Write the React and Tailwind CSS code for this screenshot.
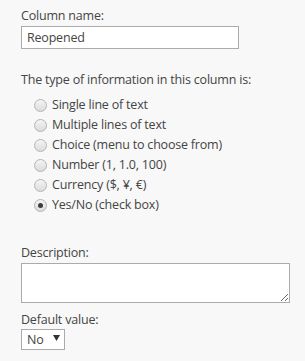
const types = [
  "Single line of text",
  "Multiple lines of text",
  "Choice (menu to choose from)",
  "Number (1, 1.0, 100)",
  "Currency ($, ¥, €)",
  "Yes/No (check box)",
];

function Radio({ checked }) {
  return (
    <span className="flex h-[13px] w-[13px] shrink-0 items-center justify-center rounded-full border border-[#b4b4b4] bg-gradient-to-b from-[#f4f4f4] to-[#dcdcdc]">
      {checked && <span className="h-[5px] w-[5px] rounded-full bg-[#3c3c3c]" />}
    </span>
  );
}

export default function App() {
  const selected = "Yes/No (check box)";

  return (
    <div
      className="min-h-[361px] w-[305px] bg-[#f8f8f8] pl-[21px] pt-2 text-[12.5px] leading-4 tracking-[-0.2px] text-[#444]"
      style={{ fontFamily: '"Open Sans", "Noto Sans", sans-serif' }}
    >
      <div className="mb-[2px]">Column name:</div>
      <div className="flex h-[23px] w-[218px] items-center border border-[#ababab] bg-white pl-[5px]">
        Reopened
      </div>

      <div className="mt-[23px]">The type of information in this column is:</div>
      <div className="mt-[7px] flex flex-col pl-[13px]">
        {types.map((t) => (
          <label key={t} className="flex h-5 items-center gap-[5px]">
            <Radio checked={t === selected} />
            <span>{t}</span>
          </label>
        ))}
      </div>

      <div className="mt-[30px] mb-[2px]">Description:</div>
      <textarea className="block h-10 w-[269px] border border-[#ababab] bg-white outline-none" />

      <div className="mt-[9px] mb-[1px]">Default value:</div>
      <div className="flex h-[21px] w-[44px] items-center border border-[#ababab] bg-white pl-[5px]">
        <span>No</span>
        <svg width="7" height="6" viewBox="0 0 7 6" className="ml-[9px] mb-[3px]">
          <path d="M0 0H7L3.5 6Z" fill="#333" />
        </svg>
      </div>
    </div>
  );
}
